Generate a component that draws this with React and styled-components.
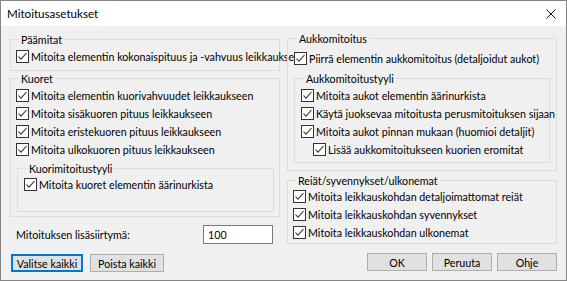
import React from 'react'
import styled, { createGlobalStyle } from 'styled-components'

const Global = createGlobalStyle`
  html, body {
    margin: 0;
    padding: 0;
    overflow: hidden;
    background: #ffffff;
  }
  * { box-sizing: border-box; }
`

const Window = styled.div`
  width: 567px;
  height: 281px;
  border: 1px solid #858585;
  background: #f0f0f0;
  display: flex;
  flex-direction: column;
  font-family: Lato, "Liberation Sans", sans-serif;
  font-size: 10.7px;
  color: #000;
`

const TitleBar = styled.div`
  height: 25px;
  background: #fff;
  display: flex;
  align-items: center;
  justify-content: space-between;
  padding: 0 9px 0 6px;
  font-size: 11.6px;
`

const CloseButton = styled.div`
  width: 12px;
  height: 12px;
  display: flex;
  align-items: center;
  justify-content: center;
`

const Body = styled.div`
  flex: 1;
  display: grid;
  grid-template-columns: 270px 270px;
  column-gap: 7px;
  padding: 0 9px 0 9px;
`

const Column = styled.div`
  display: flex;
  flex-direction: column;
  min-width: 0;
  padding-top: ${({ $top }) => $top}px;
`

const GroupBox = styled.div`
  border: 1px solid #dcdcdc;
  height: ${({ $h }) => $h}px;
  margin-top: ${({ $mt }) => $mt || 0}px;
  margin-left: ${({ $ml }) => $ml || 0}px;
  padding: 0 ${({ $pr }) => $pr ?? 5}px 0 ${({ $pl }) => $pl ?? 5}px;
  display: flex;
  flex-direction: column;
`

const Caption = styled.div`
  width: fit-content;
  margin: -7px 0 0 3px;
  padding: 0 2px;
  line-height: 13px;
  height: 13px;
  background: #f0f0f0;
  white-space: nowrap;
`

const Checks = styled.div`
  display: flex;
  flex-direction: column;
  padding-top: ${({ $pt }) => $pt || 0}px;
`

const CheckRow = styled.label`
  height: 18px;
  display: flex;
  align-items: center;
  gap: 2px;
  padding-left: ${({ $indent }) => $indent || 0}px;
  white-space: nowrap;
`

const Box = styled.span`
  width: 13px;
  height: 13px;
  border: 1px solid #333;
  background: #fff;
  display: flex;
  align-items: center;
  justify-content: center;
  flex: none;
`

const InputRow = styled.div`
  margin-top: 8px;
  height: 19px;
  display: flex;
  align-items: center;
  justify-content: space-between;
  padding: 0 7px 0 6px;
`

const TextInput = styled.div`
  width: 70px;
  height: 19px;
  border: 1px solid #7a7a7a;
  background: #fff;
  padding-left: 4px;
  display: flex;
  align-items: center;
`

const ButtonRow = styled.div`
  margin-top: ${({ $mt }) => $mt}px;
  display: flex;
  gap: ${({ $gap }) => $gap}px;
  justify-content: ${({ $end }) => ($end ? 'flex-end' : 'flex-start')};
  padding-left: ${({ $end }) => ($end ? 0 : 1)}px;
`

const Button = styled.div`
  width: ${({ $w }) => $w}px;
  height: 18px;
  background: #e1e1e1;
  border: 1px solid ${({ $default }) => ($default ? '#0078d7' : '#adadad')};
  box-shadow: ${({ $default }) => ($default ? 'inset 0 0 0 1px #0078d7' : 'none')};
  display: flex;
  align-items: center;
  justify-content: center;
`

const Check = ({ children, indent }) => (
  <CheckRow $indent={indent}>
    <Box>
      <svg width="11" height="11" viewBox="0 0 11 11">
        <polyline points="1.5,5.5 4,8.2 9.5,2" fill="none" stroke="#333" strokeWidth="1.1" />
      </svg>
    </Box>
    {children}
  </CheckRow>
)

export default function App() {
  return (
    <>
      <Global />
      <Window>
        <TitleBar>
          <span>Mitoitusasetukset</span>
          <CloseButton>
            <svg width="10" height="10" viewBox="0 0 10 10">
              <path d="M0.5 0.5 L9.5 9.5 M9.5 0.5 L0.5 9.5" stroke="#111" strokeWidth="1" />
            </svg>
          </CloseButton>
        </TitleBar>
        <Body>
          <Column $top={13}>
            <GroupBox $h={32}>
              <Caption>Päämitat</Caption>
              <Checks $pt={1}>
                <Check>Mitoita elementin kokonaispituus ja -vahvuus leikkaukseen</Check>
              </Checks>
            </GroupBox>
            <GroupBox $h={139} $mt={7}>
              <Caption>Kuoret</Caption>
              <Checks $pt={1}>
                <Check>Mitoita elementin kuorivahvuudet leikkaukseen</Check>
                <Check>Mitoita sisäkuoren pituus leikkaukseen</Check>
                <Check>Mitoita eristekuoren pituus leikkaukseen</Check>
                <Check>Mitoita ulkokuoren pituus leikkaukseen</Check>
              </Checks>
              <GroupBox $h={44} $mt={10} $ml={1} $pl={6}>
                <Caption>Kuorimitoitustyyli</Caption>
                <Checks>
                  <Check>Mitoita kuoret elementin äärinurkista</Check>
                </Checks>
              </GroupBox>
            </GroupBox>
            <InputRow>
              <span>Mitoituksen lisäsiirtymä:</span>
              <TextInput>100</TextInput>
            </InputRow>
            <ButtonRow $mt={10} $gap={7}>
              <Button $w={72} $default>Valitse kaikki</Button>
              <Button $w={74}>Poista kaikki</Button>
            </ButtonRow>
          </Column>
          <Column $top={12}>
            <GroupBox $h={133} $pl={6} $pr={6}>
              <Caption>Aukkomitoitus</Caption>
              <Checks $pt={4}>
                <Check>Piirrä elementin aukkomitoitus (detaljoidut aukot)</Check>
              </Checks>
              <GroupBox $h={85} $mt={11} $pl={6}>
                <Caption>Aukkomitoitustyyli</Caption>
                <Checks $pt={1}>
                  <Check>Mitoita aukot elementin äärinurkista</Check>
                  <Check>Käytä juoksevaa mitoitusta perusmitoituksen sijaan</Check>
                  <Check>Mitoita aukot pinnan mukaan (huomioi detaljit)</Check>
                  <Check indent={12}>Lisää aukkomitoitukseen kuorien eromitat</Check>
                </Checks>
              </GroupBox>
            </GroupBox>
            <GroupBox $h={64} $mt={9}>
              <Caption>Reiät/syvennykset/ulkonemat</Caption>
              <Checks>
                <Check>Mitoita leikkauskohdan detaljoimattomat reiät</Check>
                <Check>Mitoita leikkauskohdan syvennykset</Check>
                <Check>Mitoita leikkauskohdan ulkonemat</Check>
              </Checks>
            </GroupBox>
            <ButtonRow $mt={9} $gap={5} $end>
              <Button $w={60}>OK</Button>
              <Button $w={60}>Peruuta</Button>
              <Button $w={60}>Ohje</Button>
            </ButtonRow>
          </Column>
        </Body>
      </Window>
    </>
  )
}
